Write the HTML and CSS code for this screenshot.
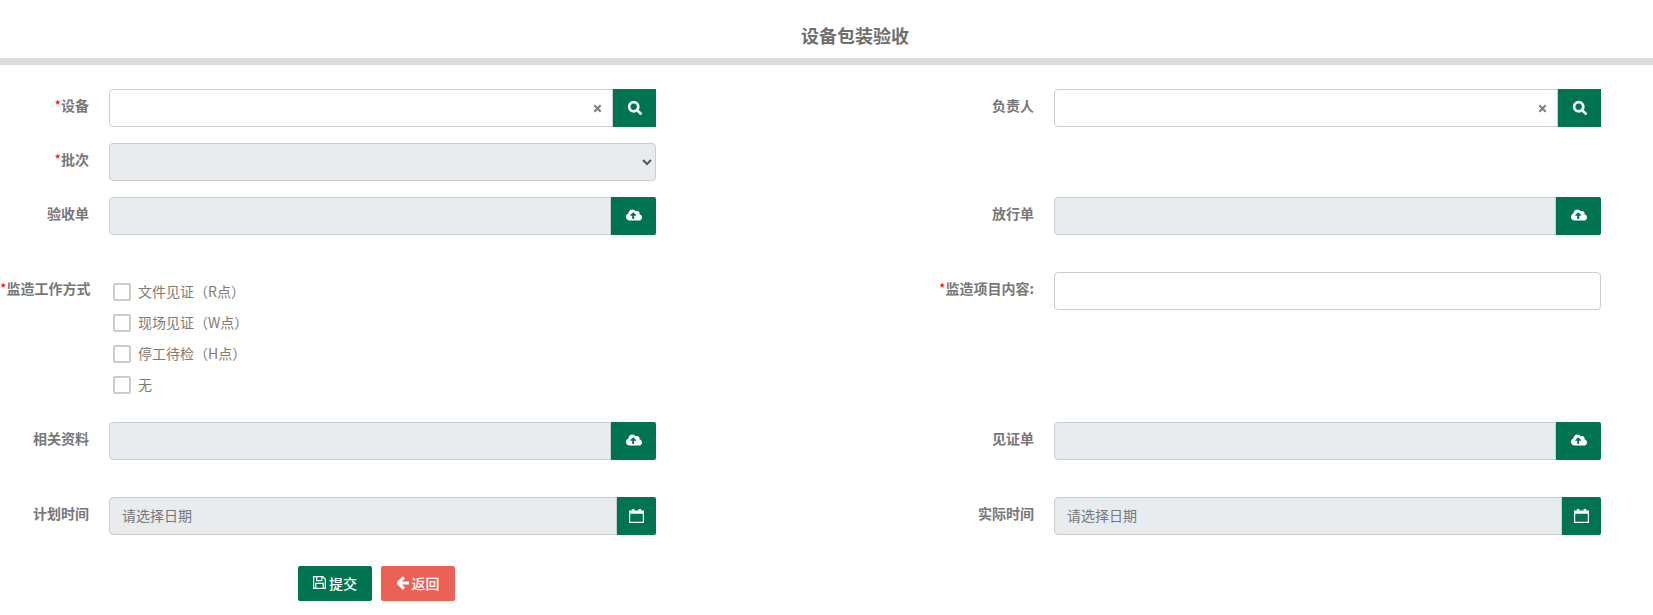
FILE: index.html
```html
<!DOCTYPE html>
<html lang="zh">
<head>
<meta charset="utf-8">
<title>设备包装验收</title>
<link rel="stylesheet" href="styles.css">
</head>
<body>
<svg class="sprite" width="0" height="0" aria-hidden="true">
  <symbol id="i-search" viewBox="0 0 512 512"><path d="M505 442.7L405.3 343c-4.5-4.5-10.6-7-17-7H372c27.6-35.3 44-79.7 44-128C416 93.1 322.9 0 208 0S0 93.1 0 208s93.1 208 208 208c48.3 0 92.7-16.4 128-44v16.3c0 6.4 2.5 12.5 7 17l99.7 99.7c9.4 9.4 24.6 9.4 33.9 0l28.3-28.3c9.4-9.4 9.4-24.6.1-34zM208 336c-70.7 0-128-57.2-128-128 0-70.7 57.2-128 128-128 70.7 0 128 57.2 128 128 0 70.7-57.2 128-128 128z"/></symbol>
  <symbol id="i-cloud" viewBox="0 0 640 512"><path d="M537.6 226.6c4.1-10.7 6.4-22.4 6.4-34.6 0-53-43-96-96-96-19.7 0-38.1 6-53.3 16.2C367 64.2 315.3 32 256 32c-88.4 0-160 71.6-160 160 0 2.7.1 5.4.2 8.1C40.2 219.8 0 273.2 0 336c0 79.5 64.5 144 144 144h368c70.7 0 128-57.3 128-128 0-61.9-44-113.6-102.4-125.4zM393.4 288H328v112c0 8.8-7.2 16-16 16h-48c-8.8 0-16-7.2-16-16V288h-65.4c-14.3 0-21.4-17.2-11.3-27.3l105.4-105.4c6.2-6.2 16.4-6.2 22.6 0l105.4 105.4c10.1 10.1 2.9 27.3-11.3 27.3z"/></symbol>
  <symbol id="i-times" viewBox="0 0 10 10"><path d="M1.5 1.5l7 7M8.5 1.5l-7 7" fill="none" stroke="currentColor" stroke-width="2.4"/></symbol>
  <symbol id="i-cal" viewBox="0 0 15 14"><path d="M0 1.5h15V14H0z M1.2 4.8v8h12.6v-8z" fill-rule="evenodd"/><path d="M2.8 0h2.6v3.4H2.8zM9.6 0h2.6v3.4H9.6z"/></symbol>
  <symbol id="i-save" viewBox="0 0 14 14"><path d="M.7.7h9.8l2.8 2.8v9.8H.7zM4 .7v4.2h5.6V.7M3 13.3V8h8v5.3" fill="none" stroke="currentColor" stroke-width="1.3"/></symbol>
  <symbol id="i-left" viewBox="0 0 448 512"><path d="M257.5 445.1l-22.2 22.2c-9.4 9.4-24.6 9.4-33.9 0L7 273c-9.4-9.4-9.4-24.6 0-33.9L201.4 44.7c9.4-9.4 24.6-9.4 33.9 0l22.2 22.2c9.5 9.5 9.3 25-.4 34.3L136.6 216H424c13.3 0 24 10.7 24 24v32c0 13.3-10.7 24-24 24H136.6l120.5 114.8c9.8 9.3 10 24.8.4 34.3z"/></symbol>
</svg>

<header class="page-head"><h1 class="page-title">设备包装验收</h1></header>

<form class="form">
  <div class="row row-first">
    <div class="field field-left">
      <label class="label"><span class="req">*</span>设备</label>
      <div class="group">
        <input class="control" type="text">
        <svg class="clear"><use href="#i-times"/></svg>
        <button class="addon addon-search" type="button"><svg class="ic-search"><use href="#i-search"/></svg></button>
      </div>
    </div>
    <div class="field field-right">
      <label class="label">负责人</label>
      <div class="group">
        <input class="control" type="text">
        <svg class="clear"><use href="#i-times"/></svg>
        <button class="addon addon-search" type="button"><svg class="ic-search"><use href="#i-search"/></svg></button>
      </div>
    </div>
  </div>

  <div class="row row-tight">
    <div class="field field-left">
      <label class="label"><span class="req">*</span>批次</label>
      <div class="group"><select class="control control-muted select"><option></option></select></div>
    </div>
  </div>

  <div class="row row-tight">
    <div class="field field-left">
      <label class="label">验收单</label>
      <div class="group">
        <input class="control control-muted" type="text" readonly>
        <button class="addon addon-upload" type="button"><svg class="ic-cloud"><use href="#i-cloud"/></svg></button>
      </div>
    </div>
    <div class="field field-right">
      <label class="label">放行单</label>
      <div class="group">
        <input class="control control-muted" type="text" readonly>
        <button class="addon addon-upload" type="button"><svg class="ic-cloud"><use href="#i-cloud"/></svg></button>
      </div>
    </div>
  </div>

  <div class="row row-wide">
    <div class="field field-left">
      <label class="label"><span class="req">*</span>监造工作方式</label>
      <div class="checks">
        <label class="check"><input class="box" type="checkbox"><span class="check-text">文件见证（R点）</span></label>
        <label class="check"><input class="box" type="checkbox"><span class="check-text">现场见证（W点）</span></label>
        <label class="check"><input class="box" type="checkbox"><span class="check-text">停工待检（H点）</span></label>
        <label class="check"><input class="box" type="checkbox"><span class="check-text">无</span></label>
      </div>
    </div>
    <div class="field field-right">
      <label class="label"><span class="req">*</span>监造项目内容:</label>
      <div class="group"><input class="control control-solo" type="text"></div>
    </div>
  </div>

  <div class="row row-after-checks">
    <div class="field field-left">
      <label class="label">相关资料</label>
      <div class="group">
        <input class="control control-muted" type="text" readonly>
        <button class="addon addon-upload" type="button"><svg class="ic-cloud"><use href="#i-cloud"/></svg></button>
      </div>
    </div>
    <div class="field field-right">
      <label class="label">见证单</label>
      <div class="group">
        <input class="control control-muted" type="text" readonly>
        <button class="addon addon-upload" type="button"><svg class="ic-cloud"><use href="#i-cloud"/></svg></button>
      </div>
    </div>
  </div>

  <div class="row row-wide">
    <div class="field field-left">
      <label class="label">计划时间</label>
      <div class="group">
        <input class="control control-muted" type="text" placeholder="请选择日期" readonly>
        <button class="addon addon-cal" type="button"><svg class="ic-cal"><use href="#i-cal"/></svg></button>
      </div>
    </div>
    <div class="field field-right">
      <label class="label">实际时间</label>
      <div class="group">
        <input class="control control-muted" type="text" placeholder="请选择日期" readonly>
        <button class="addon addon-cal" type="button"><svg class="ic-cal"><use href="#i-cal"/></svg></button>
      </div>
    </div>
  </div>

  <div class="actions">
    <button class="btn btn-submit" type="button"><svg class="ic-save"><use href="#i-save"/></svg>提交</button>
    <button class="btn btn-back" type="button"><svg class="ic-left"><use href="#i-left"/></svg>返回</button>
  </div>
</form>
</body>
</html>
```
FILE: styles.css
```css
* { box-sizing: border-box; }

body {
  margin: 0;
  background: #fff;
  color: #777;
  font-family: "Noto Sans CJK SC", "Liberation Sans", sans-serif;
  font-size: 14px;
}

.sprite { display: block; }

.page-head {
  height: 65px;
  padding: 0 0 0 57px;
  border-bottom: 7px solid #dcdcdc;
  text-align: center;
}

.page-title {
  margin: 0;
  padding-top: 22px;
  font-size: 18px;
  line-height: 26px;
  font-weight: 700;
  color: #6f6f6f;
}

.form { padding-top: 24px; }

.row {
  display: grid;
  grid-template-columns: 656px 945px;
  margin-top: 16px;
}
.row-first { margin-top: 0; }
.row-tight { margin-top: 16px; }
.row-wide { margin-top: 37px; }
.row-after-checks { margin-top: 28px; }

.field { display: flex; align-items: flex-start; column-gap: 20px; }
.field-left { grid-column: 1; }
.field-right { grid-column: 2; }
.field-left .label { width: 89px; }
.field-right .label { width: 378px; }

.label {
  flex: none;
  padding-top: 5px;
  text-align: right;
  font-weight: 700;
  line-height: 22px;
  color: #777;
  white-space: nowrap;
}
.req { color: #f00; font-weight: 400; }

.group {
  position: relative;
  display: flex;
  flex: 1;
  min-width: 0;
  height: 38px;
}

.control {
  flex: 1;
  min-width: 0;
  height: 38px;
  padding: 0 12px 2px;
  border: 1px solid #ccc;
  border-radius: 4px 0 0 4px;
  background: #fff;
  color: #555;
  font: inherit;
  outline: 0;
}
.control-solo { border-radius: 4px; }
.control-muted { background: #e9ecef; }
.control::placeholder { color: #777; opacity: 1; }

.select { border-radius: 4px; padding: 0 8px; }

.clear {
  position: absolute;
  right: 54px;
  top: 15px;
  width: 9px;
  height: 9px;
  color: #808080;
}

.addon {
  flex: none;
  display: flex;
  align-items: center;
  justify-content: center;
  height: 38px;
  padding: 0;
  border: 0;
  background: #007350;
  color: #fff;
  fill: currentColor;
}
.addon-search { width: 43px; }
.addon-upload { width: 45px; padding-bottom: 2px; border-radius: 0 2px 2px 0; }
.addon-cal { width: 39px; border-radius: 0 2px 2px 0; }

.ic-search { width: 14px; height: 14px; stroke: currentColor; stroke-width: 14; overflow: visible; }
.ic-cloud { width: 16px; height: 14px; }
.ic-cal { width: 15px; height: 14px; }

.checks { display: flex; flex-direction: column; row-gap: 13px; padding: 11px 0 0 4px; }

.check {
  display: flex;
  align-items: center;
  column-gap: 7px;
  height: 18px;
  line-height: 18px;
  color: #7f7a74;
  white-space: nowrap;
}
.check-text { margin-top: -2px; }

.box {
  appearance: none;
  flex: none;
  width: 18px;
  height: 18px;
  margin: 0;
  border: 2px solid #ccc;
  border-radius: 2px;
  background: #fff;
}

.actions {
  display: flex;
  column-gap: 9px;
  margin-top: 31px;
  padding-left: 298px;
}

.btn {
  display: flex;
  align-items: center;
  justify-content: center;
  column-gap: 3px;
  width: 74px;
  height: 35px;
  padding: 0 0 2px;
  border: 0;
  border-radius: 2px;
  color: #fff;
  fill: currentColor;
  font: inherit;
  font-weight: 500;
}
.btn-submit { background: #007350; }
.btn-back { background: #ea6155; }
.ic-save { width: 13px; height: 13px; }
.ic-left { width: 12px; height: 14px; stroke: currentColor; stroke-width: 40; overflow: visible; }
```
